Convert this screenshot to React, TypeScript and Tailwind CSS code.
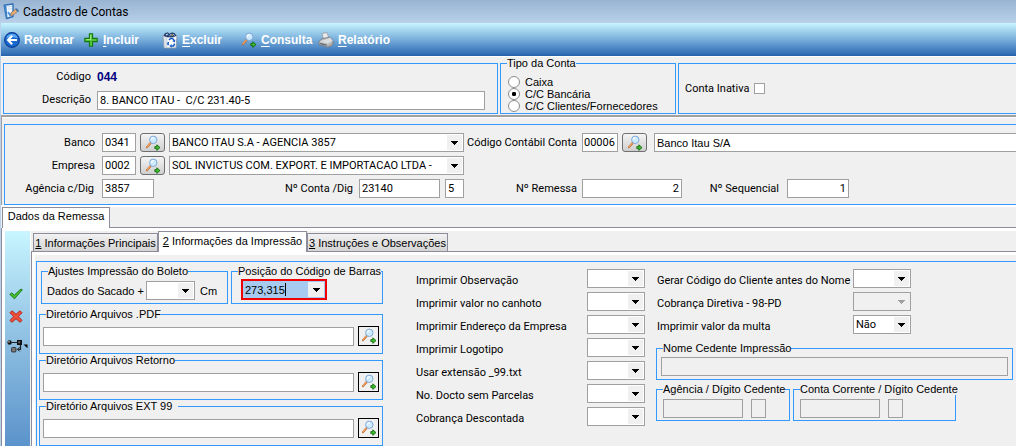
import React, { useId, useState } from 'react';

const label11 = "font-['Roboto','Noto_Sans',sans-serif] text-[11px]";
const sans = "font-['Liberation_Sans',Arial,sans-serif] text-[11px]";

/* ---------- icons ---------- */

const AppIcon = () => (
  <svg width="17" height="17" viewBox="0 0 17 17" aria-hidden="true">
    <path d="M1.2 2.2 10 1v12.5l-6.5 2z" fill="#f4f9ff" stroke="#2f6fb5" strokeWidth="1.4" strokeLinejoin="round" />
    <path d="M1.2 2.2 3.5 15.5 4.6 15 3.4 3z" fill="#3f86cc" />
    <path d="M4.5 4 9 3.4M4.8 6.2l3.8-.5" stroke="#c3daf0" />
    <path d="m5 9 2 3.2L10.6 8" fill="none" stroke="#4c94dd" strokeWidth="1.8" />
    <path d="m7.4 12.6.8-2.8 4.6-3.6 2 2-4.8 3.8z" fill="#f1b072" stroke="#8a6a50" strokeWidth=".7" />
    <path d="m12.6 5 2.6 1.2.6 2.2-1.4.6-2-2.4z" fill="#4b78a8" />
  </svg>
);

const BackIcon = () => (
  <svg width="16" height="16" viewBox="0 0 16 16" aria-hidden="true">
    <circle cx="8" cy="8" r="7.4" fill="#1767cf" stroke="#0b3d94" strokeWidth="1.1" />
    <path d="M2.2 6.2a6 6 0 0 1 11.6 0Q8 4.5 2.2 6.2z" fill="#5aa8f2" />
    <path d="M8.2 3.8 4 8l4.2 4.2M4.4 8H13" fill="none" stroke="#fff" strokeWidth="2.1" />
  </svg>
);

const PlusIcon = () => (
  <svg width="14" height="14" viewBox="0 0 14 14" aria-hidden="true">
    <path d="M5.4.8h3.2v4.6h4.6v3.2H8.6v4.6H5.4V8.6H.8V5.4h4.6z" fill="#52c435" stroke="#14780f" strokeWidth="1.1" />
    <path d="M6.2 1.8h1v5h-5v-.8h4z" fill="#b4f08c" />
  </svg>
);

const BinIcon = () => (
  <svg width="16" height="17" viewBox="0 0 16 17" aria-hidden="true">
    <path d="M1 3.6h14L14 16H2z" fill="#fff" stroke="#8797aa" strokeWidth=".9" />
    <path d="M3 5v10.5M4.8 6v9.5" stroke="#bcc8d6" />
    <path d="M2 3.8 3 1.6l2.6-.8 2 1.2L10 .8l2.6.8 1.4 2.2-3 1.2H5z" fill="#2c4c85" stroke="#16264a" strokeWidth=".6" />
    <path d="m4 2.8 1.8-.6M7.6 3.6l1.2-1M11.4 2.4l1 1" stroke="#f3f3f3" />
    <path d="m9.6 2.4 1 1.2" stroke="#f4cf44" strokeWidth="1.1" />
    <path d="m7 8 1.6-1.6h2L12 8.4" fill="none" stroke="#1557c5" strokeWidth="1.5" />
    <path d="m13.4 7.4-.6 3.2-2.6-1.6z" fill="#1557c5" />
    <path d="m12.6 11.6-1 2.4H9.2" fill="none" stroke="#1557c5" strokeWidth="1.5" />
    <path d="m9.6 12 0 3.8-2.2-1.9z" fill="#1557c5" />
    <path d="m6.6 13.2-.8-1.4.8-1.8" fill="none" stroke="#1557c5" strokeWidth="1.5" />
  </svg>
);

const SearchIcon = () => (
  <svg width="16" height="16" viewBox="0 0 16 16" aria-hidden="true">
    <path d="M5.6 8 2 12.2" stroke="#b5622c" strokeWidth="2" strokeLinecap="round" />
    <path d="M5.2 8.2 2 11.8" stroke="#f6a968" strokeWidth="1.2" strokeLinecap="round" />
    <circle cx="8.3" cy="4.8" r="3.7" fill="#cdeaff" stroke="#7fa8d6" />
    <path d="M6.2 4.6Q6.6 2.8 8.6 2.6" fill="none" stroke="#fff" strokeWidth="1.2" />
    <path d="M9.8 11.6h2V9.8l3.2 2.8-3.2 2.8v-1.8h-2z" fill="#3fc02a" stroke="#0b5f0b" strokeWidth=".8" />
  </svg>
);

const PrinterIcon = () => (
  <svg width="16" height="16" viewBox="0 0 16 16" aria-hidden="true">
    <path d="m4 1.6 5-1.1 2 6.2-5.2 1.5z" fill="#e9eaec" stroke="#969ba1" strokeWidth=".8" />
    <path d="m1 9.4 3.2-2.8L11.5 5.2 15 8.4v3.6L10 15.2l-9-2.6z" fill="#b4b7bb" stroke="#73777d" strokeWidth=".8" />
    <path d="m1.4 9.4 8.6 2.3 4.8-3.3-3.3-3-1 1.2-5.4 1.6z" fill="#dcdddf" />
    <path d="m2.2 11.5 6.5 1.8" stroke="#595d63" strokeWidth="1.1" />
    <path d="m11.4 14 2.4-1.5" stroke="#c99c7c" strokeWidth="1.2" />
  </svg>
);

const CheckIcon = () => (
  <svg width="14" height="12" viewBox="0 0 14 12" aria-hidden="true">
    <path d="m.8 6.4 2-1.6 2.4 2.4L12 1l1.3.8-7.8 9z" fill="#45c02c" stroke="#14760f" strokeWidth=".9" strokeLinejoin="round" />
  </svg>
);

const CrossIcon = () => (
  <svg width="14" height="13" viewBox="0 0 14 13" aria-hidden="true">
    <path d="M1 2.8 3 .8l4 3.5L11 .8l2 2-3.7 3.7L13 10.4l-2 1.9-4-3.6-4 3.6-2-1.9 3.7-3.9z" fill="#f2503b" stroke="#b0180c" strokeWidth=".9" strokeLinejoin="round" />
  </svg>
);

const NetworkIcon = () => (
  <svg width="21" height="14" viewBox="0 0 21 14" aria-hidden="true">
    <circle cx="2.6" cy="3.5" r="2.2" fill="#111" />
    <circle cx="2" cy="2.9" r=".8" fill="#bbb" />
    <path d="M5 3.5h5M13.5 6v4.3h-3" stroke="#222" strokeWidth="1.2" fill="none" />
    <rect x="10" y="1" width="5" height="5" fill="#111" />
    <rect x="11.2" y="2.2" width="2" height="2" fill="#667" />
    <rect x="4.5" y="8.5" width="4.5" height="4.5" rx="1" fill="#777" stroke="#222" strokeWidth=".8" />
    <path d="m12.6 8.2-2 2.1 2 2.1" fill="none" stroke="#222" />
    <path d="M16.5 5.5h4v3.8z" fill="#000" />
  </svg>
);

const Arrow = ({ dim = false }: { dim?: boolean }) => (
  <svg width="7" height="4" viewBox="0 0 7 4" aria-hidden="true" shapeRendering="crispEdges">
    <path d="M0 0h7v1H0zM1 1h5v1H1zM2 2h3v1H2zM3 3h1v1H3z" fill={dim ? '#a0a0a0' : '#000'} />
  </svg>
);

/* ---------- controls ---------- */

const field = 'block h-[19px] border border-[#a0a0a0] bg-white px-0.5 text-black outline-none disabled:bg-[#f0f0f0]';

interface FieldProps extends React.InputHTMLAttributes<HTMLInputElement> {
  label: string;
}

const Field = ({ label, className = '', ...rest }: FieldProps) => (
  <input aria-label={label} className={`${field} ${className}`} {...rest} />
);

interface ComboProps {
  label?: string;
  id?: string;
  options?: string[];
  className?: string;
  disabled?: boolean;
}

const Combo = ({ label, id, options = [''], className = 'w-[58px]', disabled }: ComboProps) => (
  <span className={`relative block h-[19px] shrink-0 ${className}`}>
    <select
      id={id}
      aria-label={label}
      disabled={disabled}
      className={`${label11} block h-full w-full appearance-none border border-[#a0a0a0] bg-white pr-4 pl-0.5 text-black opacity-100 outline-none disabled:bg-[#f0f0f0]`}
    >
      {options.map(o => (
        <option key={o}>{o}</option>
      ))}
    </select>
    <span className="pointer-events-none absolute inset-y-0.5 right-0.5 flex w-[15px] items-center justify-center bg-[#f0f0f0]">
      <Arrow dim={disabled} />
    </span>
  </span>
);

const LookupButton = ({ label }: { label: string }) => (
  <button
    type="button"
    aria-label={label}
    className="flex h-[19px] w-[25px] shrink-0 items-center justify-center rounded-[3px] border border-[#707070] bg-linear-to-b from-[#f4f4f4] to-[#cfcfcf]"
  >
    <SearchIcon />
  </button>
);

interface GroupProps {
  title: string;
  className?: string;
  children: React.ReactNode;
}

const Group = ({ title, className = '', children }: GroupProps) => (
  <fieldset className={`min-w-0 border border-[#3399ff] ${className}`}>
    <legend className={`${sans} ml-1.5 leading-3 whitespace-pre`}>{title}</legend>
    {children}
  </fieldset>
);

const ComboRow = ({ label, options, disabled }: { label: string; options?: string[]; disabled?: boolean }) => {
  const id = useId();
  return (
    <div className="flex items-end justify-between">
      <label htmlFor={id} className="leading-[14px] whitespace-nowrap">{label}</label>
      <Combo id={id} options={options} disabled={disabled} />
    </div>
  );
};

const Directory = ({ title }: { title: string }) => (
  <Group title={title} className="h-[46px]">
    <div className="flex items-center gap-1 px-[3px] pt-1.5">
      <Field label={title} className={`${label11} min-w-0 flex-1`} />
      <button
        type="button"
        aria-label={`Procurar ${title}`}
        className="flex h-5 w-[21px] items-center justify-center border border-black bg-[#f0f0f0]"
      >
        <SearchIcon />
      </button>
    </div>
  </Group>
);

/* ---------- screen sections ---------- */

const toolbar = [
  { key: 'R', rest: 'etornar', icon: BackIcon, underline: false, width: 'w-[79px]' },
  { key: 'I', rest: 'ncluir', icon: PlusIcon, underline: true, width: 'w-[79px]' },
  { key: 'E', rest: 'xcluir', icon: BinIcon, underline: true, width: 'w-[79px]' },
  { key: 'C', rest: 'onsulta', icon: SearchIcon, underline: true, width: 'w-[77px]' },
  { key: 'R', rest: 'elatório', icon: PrinterIcon, underline: true, width: 'w-20' },
];

const Toolbar = () => (
  <nav className="flex h-[33px] items-center border-b border-[#2a62ab] bg-linear-to-b from-[#c8f5ff] via-[#7bb0dc] to-[#2d69b3] pt-0.5 pl-[3px]">
    {toolbar.map(({ key, rest, icon: Icon, underline, width }) => (
      <button
        key={key + rest}
        type="button"
        className={`flex shrink-0 items-center gap-1 font-['Liberation_Sans',Arial,sans-serif] text-[12px] font-bold whitespace-nowrap text-white ${width}`}
      >
        <span className="flex w-4 justify-center"><Icon /></span>
        <span><span className={underline ? 'underline underline-offset-2' : ''}>{key}</span>{rest}</span>
      </button>
    ))}
  </nav>
);

const AccountHeader = () => {
  const [tipo, setTipo] = useState('C/C Bancária');
  return (
    <section className="grid grid-cols-[495fr_176fr_338fr] gap-0.5 pb-px pl-0.5">
      <div className="mt-1.5 flex flex-col justify-center gap-1 border border-[#3399ff] pr-3">
        <div className="flex h-[19px] items-center gap-1.5">
          <span className="w-[87px] text-right">Código</span>
          <output className="font-['Liberation_Sans',Arial,sans-serif] text-[12px] font-bold text-[#000080]">044</output>
        </div>
        <div className="flex items-center gap-1.5">
          <label htmlFor="descricao" className="w-[87px] text-right">Descrição</label>
          <input id="descricao" defaultValue="8. BANCO ITAU -  C/C 231.40-5" className={`${field} min-w-0 flex-1`} />
        </div>
      </div>
      <Group title="Tipo da Conta" className="h-[57px]">
        <div className={`${sans} flex flex-col pt-[7px] pl-[7px]`}>
          {['Caixa', 'C/C Bancária', 'C/C Clientes/Fornecedores'].map(t => (
            <label key={t} className="flex h-3 items-center gap-[5px] whitespace-nowrap">
              <input
                type="radio"
                name="tipo"
                checked={tipo === t}
                onChange={() => setTipo(t)}
                className="size-3 appearance-none rounded-full border border-[#8c8c8c] bg-white checked:bg-radial checked:from-black checked:from-25% checked:to-white checked:to-35%"
              />
              {t}
            </label>
          ))}
        </div>
      </Group>
      <div className="mt-1.5 flex items-center border border-r-0 border-[#3399ff] pl-1.5">
        <label className="flex items-center gap-[5px]">
          Conta Inativa
          <input type="checkbox" className="size-[11px] appearance-none border border-[#a0a0a0] bg-white checked:bg-black" />
        </label>
      </div>
    </section>
  );
};

const BankPanel = () => (
  <section className="border-t-2 border-l border-[#a0a0a0]">
    <div className="border-t border-white pt-1.5 pl-0.5">
      <div className="flex flex-col gap-1 border border-r-0 border-[#3399ff] pt-2 pb-1.5">
        <div className="flex items-center">
          <label htmlFor="banco" className="mr-[7px] w-[90px] shrink-0 text-right">Banco</label>
          <input id="banco" defaultValue="0341" className={`${field} mr-1 w-[34px]`} />
          <LookupButton label="Procurar banco" />
          <Combo label="Nome do banco" options={['BANCO ITAU S.A - AGENCIA 3857']} className="ml-1 w-[295px]" />
          <label htmlFor="contabil" className="w-[118px] shrink-0 pr-[5px] text-right whitespace-nowrap">Código Contábil Conta</label>
          <input id="contabil" defaultValue="00006" className={`${field} mr-1 w-9 pr-0 pl-px`} />
          <LookupButton label="Procurar conta contábil" />
          <Field label="Nome da conta contábil" defaultValue="Banco Itau S/A" className={`${sans} ml-[7px] min-w-0 flex-1 border-r-0`} />
        </div>
        <div className="flex items-center">
          <label htmlFor="empresa" className="mr-[7px] w-[90px] shrink-0 text-right">Empresa</label>
          <input id="empresa" defaultValue="0002" className={`${field} mr-1 w-[34px]`} />
          <LookupButton label="Procurar empresa" />
          <Combo label="Nome da empresa" options={['SOL INVICTUS COM. EXPORT. E IMPORTACAO LTDA -']} className="ml-1 w-[295px]" />
        </div>
        <div className="flex items-center">
          <label htmlFor="agencia" className="mr-2 w-[89px] shrink-0 text-right">Agência c/Dig</label>
          <input id="agencia" defaultValue="3857" className={`${field} w-[52px]`} />
          <label htmlFor="conta" className="w-[205px] shrink-0 pr-1.5 text-right">Nº Conta /Dig</label>
          <input id="conta" defaultValue="23140" className={`${field} mr-[5px] w-[81px]`} />
          <Field label="Dígito da conta" defaultValue="5" className="w-[19px]" />
          <label htmlFor="remessa" className="w-[118px] shrink-0 pr-[5px] text-right">Nº Remessa</label>
          <input id="remessa" defaultValue="2" className={`${field} w-[100px] text-right`} />
          <label htmlFor="sequencial" className="w-[105px] shrink-0 pr-2 text-right">Nº Sequencial</label>
          <input id="sequencial" defaultValue="1" className={`${field} w-[62px] text-right`} />
        </div>
      </div>
    </div>
  </section>
);

const tabs = [
  { key: '1', text: 'Informações Principais', width: 'w-[125px]' },
  { key: '2', text: 'Informações da Impressão', width: 'w-[149px]' },
  { key: '3', text: 'Instruções e Observações', width: 'w-[141px]' },
];

const leftOptions = [
  'Imprimir Observação',
  'Imprimir valor no canhoto',
  'Imprimir Endereço da Empresa',
  'Imprimir Logotipo',
  'Usar extensão _99.txt',
  'No. Docto sem Parcelas',
  'Cobrança Descontada',
];

const PrintSettings = () => (
  <div className="flex min-h-0 flex-1 border-t border-l border-[#3399ff]">
    <div className="flex w-[346px] shrink-0 flex-col pt-[3px] pl-0.5">
      <div className="mb-1 flex gap-[3px] pl-0.5">
        <Group title="Ajustes Impressão do Boleto" className="h-[39px] w-[187px]">
          <div className={`${sans} flex items-center px-[5px] pt-1`}>
            <label htmlFor="sacado" className="w-[99px] whitespace-nowrap">Dados do Sacado +</label>
            <Combo id="sacado" className="w-[49px]" />
            <span className="ml-[5px]">Cm</span>
          </div>
        </Group>
        <Group title="Posição do Código de Barras" className="h-[39px] flex-1">
          <div className="mt-0.5 ml-[9px] flex h-[21px] w-[86px] items-center border-2 border-[#f00000] bg-[#a6caf0]">
            <input
              aria-label="Posição do Código de Barras"
              defaultValue="273,315"
              className="field-sizing-content pl-0.5 font-['Liberation_Sans',Arial,sans-serif] text-[11px] outline-none"
            />
            <span className="h-[13px] w-px bg-black" />
            <button type="button" aria-label="Abrir lista" className="mr-px ml-auto flex h-[15px] w-4 items-center justify-center bg-[#f0f0f0]">
              <Arrow />
            </button>
          </div>
        </Group>
      </div>
      <Directory title="Diretório Arquivos .PDF" />
      <Directory title="Diretório Arquivos Retorno" />
      <Directory title="Diretório Arquivos EXT 99  " />
    </div>
    <div className="ml-[33px] flex w-[229px] shrink-0 flex-col gap-1 pt-[7px]">
      {leftOptions.map(o => <ComboRow key={o} label={o} />)}
    </div>
    <div className="ml-[11px] min-w-0 flex-1 pt-[7px] pr-[3px]">
      <div className="flex w-[255px] flex-col gap-1 pl-px">
        <ComboRow label="Gerar Código do Cliente antes do Nome" />
        <ComboRow label="Cobrança Diretiva - 98-PD" disabled />
        <ComboRow label="Imprimir valor da multa" options={['Não']} />
      </div>
      <Group title="Nome Cedente Impressão" className="mt-2 h-[38px]">
        <Field label="Nome Cedente Impressão" disabled className="mx-auto mt-[3px] w-[calc(100%-8px)]" />
      </Group>
      <div className="mt-[3px] flex gap-[3px]">
        <Group title="Agência / Dígito Cedente" className="h-[38px] w-[134px]">
          <div className="flex gap-2 px-1.5 pt-1">
            <Field label="Agência" disabled className="w-20" />
            <Field label="Dígito da agência" disabled className="w-[15px]" />
          </div>
        </Group>
        <Group title="Conta Corrente / Dígito Cedente" className="h-[38px] w-[163px]">
          <div className="flex gap-2 px-1.5 pt-1">
            <Field label="Conta corrente" disabled className="w-20" />
            <Field label="Dígito da conta corrente" disabled className="w-[15px]" />
          </div>
        </Group>
      </div>
    </div>
  </div>
);

export default function App() {
  const [tab, setTab] = useState('2');

  return (
    <main className={`${label11} flex h-screen flex-col overflow-hidden bg-[#f0f0f0] leading-[14px] text-black`}>
      <header className="flex h-[23px] shrink-0 items-center gap-[3px] bg-linear-to-b from-[#98b4d2] to-[#b9d1ea] pl-[3px]">
        <AppIcon />
        <h1 className="text-[12px]">Cadastro de Contas</h1>
      </header>
      <div className="flex min-h-0 flex-1 flex-col border-l border-[#b9d1ea]">
        <Toolbar />
        <div className="h-px shrink-0 bg-white" />
        <AccountHeader />
        <BankPanel />

        <div className="flex shrink-0 border-t-2 border-white" role="tablist">
          <button
            type="button"
            role="tab"
            aria-selected="true"
            className={`${sans} ml-px h-[21px] w-[108px] border-t border-r border-l border-[#8c8c9a] bg-white pb-1 whitespace-nowrap`}
          >
            Dados da Remessa
          </button>
          <div className="flex-1 border-b border-[#8c8c9a]" />
        </div>

        <div className="flex min-h-0 flex-1 border-l border-[#8c8c9a] bg-white pt-[3px] pl-[3px]">
          <aside className="flex w-[25px] shrink-0 flex-col items-center bg-linear-to-b from-[#c8f5ff] via-[#8fc0e2] to-[#5b93cb] pt-[57px]">
            <button type="button" aria-label="Confirmar" className="mr-1"><CheckIcon /></button>
            <button type="button" aria-label="Cancelar" className="mt-2.5 mr-1"><CrossIcon /></button>
            <button type="button" aria-label="Opções" className="mt-4"><NetworkIcon /></button>
          </aside>
          <div className="flex min-w-0 flex-1 flex-col bg-[#f0f0f0]">
            <div className="flex shrink-0 items-end border-l border-white" role="tablist">
              <div className="w-0.5 self-stretch border-b border-[#8c8c9a]" />
              {tabs.map(t => (
                <button
                  key={t.key}
                  type="button"
                  role="tab"
                  aria-selected={tab === t.key}
                  onClick={() => setTab(t.key)}
                  className={`${sans} border border-[#8c8c9a] whitespace-nowrap ${t.width} ${
                    tab === t.key ? 'h-[21px] border-b-0 bg-white pb-0.5' : 'h-[19px] bg-linear-to-b from-[#f2f2f2] to-[#d4d4d4]'
                  }`}
                >
                  <span className="underline">{t.key}</span> {t.text}
                </button>
              ))}
              <div className="flex-1 self-stretch border-b border-[#8c8c9a]" />
            </div>
            <div className="ml-px flex min-h-0 flex-1 flex-col border-l border-[#8c8c9a]">
              <div className="flex min-h-0 flex-1 flex-col border-t-[3px] border-l-[3px] border-white pt-1.5 pl-px">
                <PrintSettings />
              </div>
            </div>
          </div>
        </div>
      </div>
    </main>
  );
}
